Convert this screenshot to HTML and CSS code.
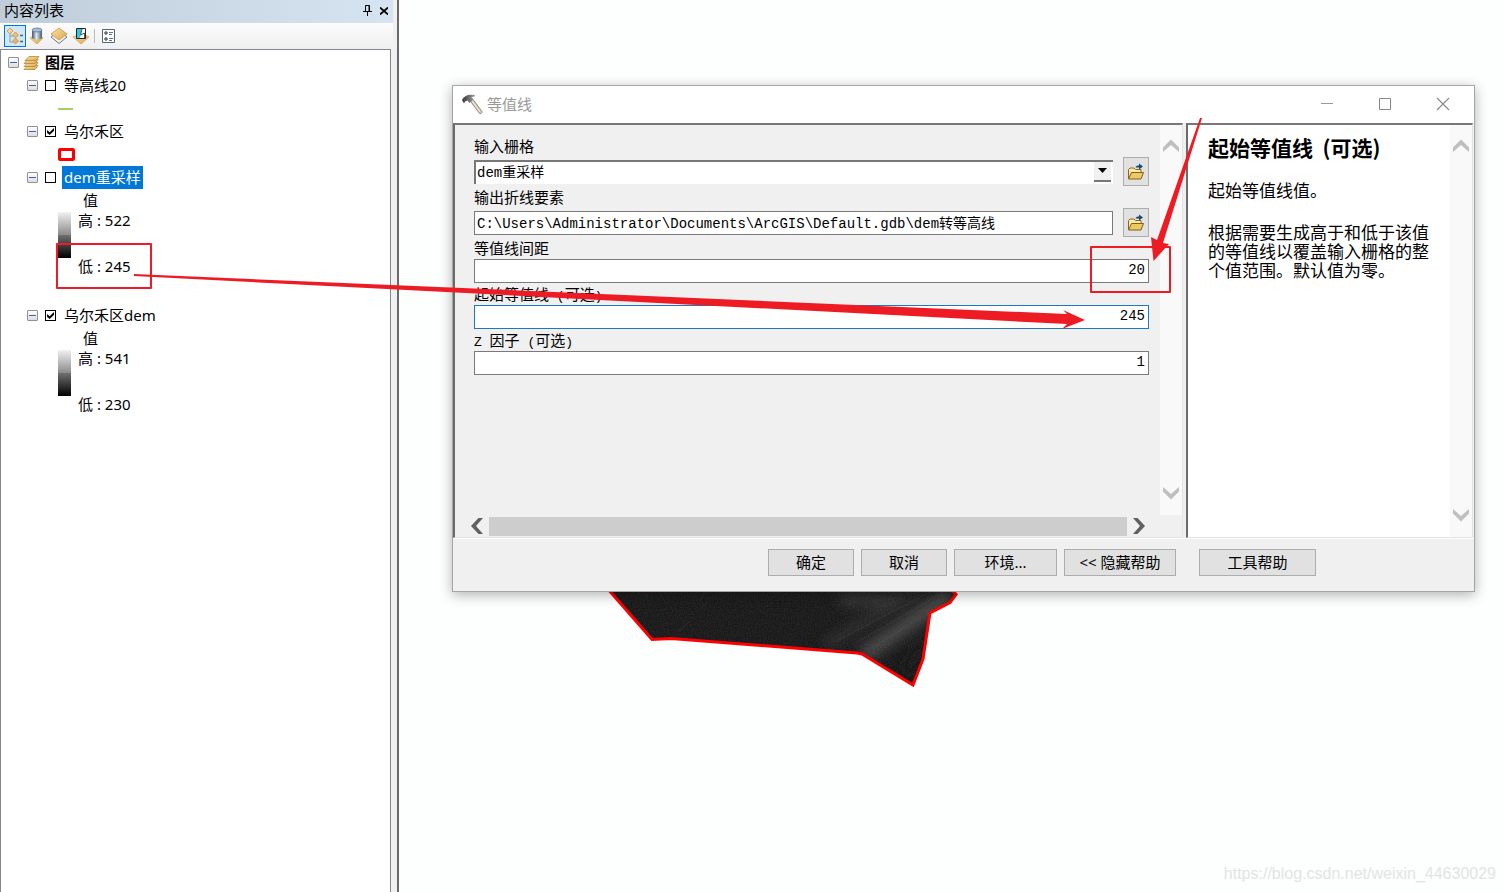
FILE: index.html
```html
<!DOCTYPE html>
<html lang="zh-CN">
<head>
<meta charset="utf-8">
<title>等值线</title>
<link rel="stylesheet" href="styles.css">
</head>
<body>
<svg class="defs" width="0" height="0" aria-hidden="true">
  <defs>
    <linearGradient id="gold" x1="0" y1="0" x2="1" y2="1"><stop offset="0" stop-color="#fbe3ae"/><stop offset="1" stop-color="#dca648"/></linearGradient>
    <linearGradient id="drum" x1="0" x2="1"><stop offset="0" stop-color="#3f566f"/><stop offset=".45" stop-color="#dfe8f2"/><stop offset="1" stop-color="#425a76"/></linearGradient>
    <linearGradient id="steel" x1="0" x2="1"><stop offset="0" stop-color="#333"/><stop offset="1" stop-color="#a0a5a5"/></linearGradient>
    <symbol id="folder" viewBox="0 0 18 18">
      <path d="M1.500 15.500V6.500L3 5h4l1.500 1.500h5.500V9" fill="#fbe9a4" stroke="#8a6a22"/>
      <path d="M1.500 16 4.500 9.500h12L14 16z" fill="#edc964" stroke="#806020"/>
      <path d="M8.500 4.500C9 3 10 2.500 12 2.500V.5L16 3.500 12 6.500v-2c-1.500 0-2.500 0-3.500 0z" fill="#164a72"/>
    </symbol>
    <symbol id="chev-up" viewBox="0 0 18 14"><path d="M1 13V8.500L9 .5l8 8V13L9 6z" fill="currentColor"/></symbol>
    <symbol id="chev-down" viewBox="0 0 18 14"><path d="M1 1v4.500l8 8 8-8V1L9 8z" fill="currentColor"/></symbol>
  </defs>
</svg>
<div class="app">
  <aside class="toc">
    <header class="toc-head">
      <h1>内容列表</h1>
      <button class="plain" aria-label="固定"><svg width="9" height="11" viewBox="0 0 9 11"><path d="M2.500 6V.5h4V6M6 1v5M0 6.500h9M4.500 7v4" fill="none" stroke="#000"/></svg></button>
      <button class="plain" aria-label="关闭"><svg width="8" height="8" viewBox="0 0 8 8"><path d="M0 .5 8 7.500M8 .5 0 7.500" stroke="#000" stroke-width="1.800"/></svg></button>
    </header>
    <nav class="toolbar">
      <button class="tool on" aria-label="按绘制顺序列出"><svg width="18" height="18" viewBox="0 0 18 18"><path d="M4 7v8h5M4 9h5" fill="none" stroke="#7f9db5"/><path d="M4 1 7 4 4 7 1 4zM9.500 5l3 3-3 3-3-3zM9.500 11l3 3-3 3-3-3z" fill="url(#gold)" stroke="#c99443" stroke-width=".8"/><path d="M14 8.500h3M14 14.500h3" stroke="#47637f" stroke-width="1.500"/></svg></button>
      <button class="tool" aria-label="按源列出"><svg width="18" height="18" viewBox="0 0 18 18"><path d="M2 11 9 7l6 4-6 6z" fill="url(#gold)" stroke="#cf9d4b" stroke-width=".7"/><path d="M4 3v8c2 2 8 2 10 0V3z" fill="url(#drum)"/><ellipse cx="9" cy="3" rx="5" ry="2" fill="#a9bdd4" stroke="#506985" stroke-width=".7"/></svg></button>
      <button class="tool" aria-label="按可见性列出"><svg width="18" height="18" viewBox="0 0 18 18"><path d="M1 10 9 4l8 6-8 6.500z" fill="#f2f3f4" stroke="#707780"/><path d="M1 7 9 1l8 6-8 6z" fill="url(#gold)" stroke="#c9943e" stroke-width=".8"/></svg></button>
      <button class="tool" aria-label="按选择列出"><svg width="18" height="18" viewBox="0 0 18 18"><path d="M1 10 9 6l8 4-8 7z" fill="url(#gold)" stroke="#d09c48" stroke-width=".7"/><path d="M4.500 1.500h9v10h-9z" fill="#fff" stroke="#222"/><path d="M5 2h5L8 11H5z" fill="#26cce7"/><path d="M10 2 8.500 8l4-2v5" fill="none" stroke="#555"/></svg></button>
      <span class="sep"></span>
      <button class="tool" aria-label="选项"><svg width="14" height="16" viewBox="0 0 14 16"><path d="M.5 1.500h12v13H.5z" fill="#fff" stroke="#52667c"/><circle cx="4" cy="5" r="1.200" fill="#fff" stroke="#222"/><circle cx="4" cy="11" r="1.200" fill="#fff" stroke="#222"/><path d="M7 4.500h4M7 6.500h3M7 10.500h4M7 12.500h3" stroke="#60758b"/></svg></button>
    </nav>
    <div class="tree">
      <div class="row root"><button class="exp" aria-label="折叠"></button><svg width="18" height="16" viewBox="0 0 18 16"><g fill="url(#gold)" stroke="#b98736" stroke-width=".8"><path d="M1 14.500 5 10.500h10l-3 4z"/><path d="M1 11.500 5 7.500h10l-3 4z"/><path d="M1 8.500 5 4.500h10l-3 4z"/><path d="M2 5.500 6 1.500h10l-3 4z"/></g></svg><b>图层</b></div>
      <div class="row"><button class="exp" aria-label="折叠"></button><label><input type="checkbox" class="tick"><span>等高线20</span></label></div>
      <div class="row sym"><i class="line-sym"></i></div>
      <div class="row"><button class="exp" aria-label="折叠"></button><label><input type="checkbox" class="tick" checked><span>乌尔禾区</span></label></div>
      <div class="row sym"><i class="box-sym"></i></div>
      <div class="row"><button class="exp" aria-label="折叠"></button><label><input type="checkbox" class="tick"><span class="picked">dem重采样</span></label></div>
      <div class="row value">值</div>
      <div class="legend"><i class="ramp"></i><span>高 : 522</span><span class="low">低 : 245</span></div>
      <div class="row"><button class="exp" aria-label="折叠"></button><label><input type="checkbox" class="tick" checked><span>乌尔禾区dem</span></label></div>
      <div class="row value">值</div>
      <div class="legend"><i class="ramp"></i><span>高 : 541</span><span class="low">低 : 230</span></div>
    </div>
  </aside>

  <main class="map">
    <svg class="raster" width="380" height="120" viewBox="600 580 380 120" aria-hidden="true">
      <defs>
        <clipPath id="area"><path d="M600 580 652 640l19-1 186 14 5 1 51 31 10-26 7-46 20-11 7-7-6-16z"/></clipPath>
        <filter id="soft"><feGaussianBlur stdDeviation="6"/></filter>
        <filter id="grain" x="0" y="0" width="1" height="1"><feTurbulence type="fractalNoise" baseFrequency=".7" numOctaves="2" seed="4"/><feColorMatrix values="0 0 0 0 .6 0 0 0 0 .6 0 0 0 0 .6 .5 0 0 0 -.17"/></filter>
      </defs>
      <g clip-path="url(#area)">
        <path d="M600 580h380v120H600z" fill="#191919"/>
        <g filter="url(#soft)" fill="none">
          <path d="M862 656 950 595" stroke="#444" stroke-width="16"/>
          <path d="M825 645 920 590" stroke="#292929" stroke-width="11"/>
          <path d="M840 600h60" stroke="#303030" stroke-width="14"/>
          <path d="M905 672 925 645" stroke="#151515" stroke-width="14"/>
        </g>
        <path d="M835 642 930 592M852 645 940 594M872 648 945 603M701 609l6-7M678 632l12-11" stroke="#565656" stroke-width=".7" opacity=".4"/>
        <path d="M600 580h380v120H600z" filter="url(#grain)" opacity=".4"/>
      </g>
      <path d="M601 581 652 639.500l19-1 186 14.500 5 1 51 31 10-26 7-46 20-10.500 6-8-5-5" fill="none" stroke="red" stroke-width="3"/>
    </svg>
    <span class="watermark">https://blog.csdn.net/weixin_44630029</span>

    <section class="dialog" role="dialog" aria-labelledby="dlg-title">
      <header class="titlebar">
        <svg width="22" height="22" viewBox="0 0 22 22"><path d="M8.500 7 11 5l10 13.500c.3 1.500-1.200 2.500-2.500 2z" fill="#d5c9b5" stroke="#80786c" stroke-width=".8"/><path d="M11 8 19 19" stroke="#f1eadc"/><path d="M1 7C3 3 7 .8 14 2v1.500c-2 0-3 .5-3.500 1.500L12 7 8.500 10 6.500 7.500 4 8.500 3 10.500z" fill="url(#steel)"/></svg>
        <h2 id="dlg-title">等值线</h2>
        <button class="win" aria-label="最小化"><svg width="14" height="14" viewBox="0 0 14 14"><path d="M1 6.500h12" stroke="#999"/></svg></button>
        <button class="win" aria-label="最大化"><svg width="14" height="14" viewBox="0 0 14 14"><path d="M1.500 1.500h11v11h-11z" fill="none" stroke="#888"/></svg></button>
        <button class="win" aria-label="关闭"><svg width="14" height="14" viewBox="0 0 14 14"><path d="m1 1 12 12M13 1 1 13" stroke="#888" stroke-width="1.100"/></svg></button>
      </header>
      <div class="panes">
        <div class="pane form-pane">
          <form class="fields" id="tool">
            <div class="field">
              <label for="raster">输入栅格</label>
              <div class="pick"><div class="combo"><select id="raster"><option>dem重采样</option></select><span class="drop"><svg width="9" height="5" viewBox="0 0 9 5"><path d="M0 0h9L4.500 5z"/></svg></span></div><button type="button" class="browse" aria-label="浏览"><svg width="18" height="18"><use href="#folder"/></svg></button></div>
            </div>
            <div class="field">
              <label for="out">输出折线要素</label>
              <div class="pick"><input class="box" id="out" type="text" value="C:\Users\Administrator\Documents\ArcGIS\Default.gdb\dem转等高线"><button type="button" class="browse" aria-label="浏览"><svg width="18" height="18"><use href="#folder"/></svg></button></div>
            </div>
            <div class="field"><label for="step">等值线间距</label><input class="box num" id="step" type="text" value="20"></div>
            <div class="field"><label for="base">起始等值线<span class="mono"> (</span>可选<span class="mono">)</span></label><input class="box num focus" id="base" type="text" value="245"></div>
            <div class="field"><label for="zf"><span class="mono">Z </span>因子<span class="mono"> (</span>可选<span class="mono">)</span></label><input class="box num" id="zf" type="text" value="1"></div>
          </form>
          <div class="vbar"><svg width="18" height="14"><use href="#chev-up"/></svg><svg width="18" height="14"><use href="#chev-down"/></svg></div>
          <div class="hbar"><svg width="14" height="18" viewBox="0 0 14 18"><path d="M13 1H8.500L1 9l7.500 8H13L6 9z" fill="#606060"/></svg><i class="thumb"></i><svg width="14" height="18" viewBox="0 0 14 18"><path d="M1 1h4.500L13 9l-7.500 8H1l7-8z" fill="#606060"/></svg></div>
        </div>
        <div class="pane help-pane">
          <article>
            <h3>起始等值线&nbsp; (可选)</h3>
            <p>起始等值线值。</p>
            <p>根据需要生成高于和低于该值的等值线以覆盖输入栅格的整个值范围。默认值为零。</p>
          </article>
          <div class="vbar"><svg width="18" height="14"><use href="#chev-up"/></svg><svg width="18" height="14"><use href="#chev-down"/></svg></div>
        </div>
      </div>
      <footer class="actions">
        <button class="btn">确定</button>
        <button class="btn">取消</button>
        <button class="btn wide">环境...</button>
        <button class="btn wider">&lt;&lt; 隐藏帮助</button>
        <button class="btn help">工具帮助</button>
      </footer>
    </section>
  </main>
</div>
<svg class="marks" width="1505" height="892" viewBox="0 0 1505 892" aria-hidden="true">
  <g fill="none" stroke="#ed1c24" stroke-width="2"><path d="M57 244h94v44H57zM1091 247h79v45h-79z" stroke-linejoin="round"/></g>
  <path d="M134 274 1067 314 1063 310 1085 320 1062 329 1067 324 134 276z" fill="#ed1c24"/>
  <path d="M1200 118 1157 240 1151 237 1153.500 261 1169 244 1163 243 1202 118z" fill="#ed1c24"/>
</svg>
</body>
</html>
```
FILE: styles.css
```css
* { box-sizing: border-box; }
body {
  margin: 0;
  font: 15px/23px "Noto Sans", "Noto Sans CJK SC", sans-serif;
  color: #000;
  background: #fdfefe;
  overflow: hidden;
}
h1, h2, h3, p { margin: 0; font-weight: normal; }
button, input, select { font: inherit; color: inherit; margin: 0; padding: 0; border-radius: 0; }
svg { display: block; flex: none; }
.defs, .marks { position: absolute; top: 0; left: 0; pointer-events: none; }
.app { display: flex; height: 100vh; }

.toc {
  flex: none;
  width: 399px;
  display: flex;
  flex-direction: column;
  padding-right: 4px;
  background: #f0f0f0;
  border-right: 2px solid #6b6b6b;
}
.toc-head {
  display: flex;
  align-items: center;
  gap: 8px;
  height: 23px;
  padding: 0 5px 2px 4px;
  background: linear-gradient(90deg, #bfcddb, #d6e4f2);
}
.toc-head h1 { flex: 1; font-size: 15px; }
.plain { display: grid; place-items: center; border: 0; background: none; }
.toolbar {
  display: flex;
  align-items: center;
  height: 26px;
  padding-left: 4px;
  background: linear-gradient(#fcfcfc, #efefef);
}
.tool { display: grid; place-items: center; width: 22px; height: 22px; border: 0; background: none; }
.tool.on { background: #d2e7f6; border: 1px solid #0078d7; }
.sep { width: 1px; height: 14px; margin: 0 3px 0 2px; background: #bbb; }
.tree { flex: 1; margin-right: 2px; padding-top: 1px; border: 1px solid #828790; border-bottom: 0; background: #fff; }
.row { display: flex; align-items: center; height: 23px; padding-left: 26px; }
.row.root { padding-left: 7px; gap: 4px; }
.row label { display: flex; align-items: center; }
.row label span { padding: 0 2px; }
.row .picked { background: #0078d7; color: #fff; }
.exp {
  width: 11px;
  height: 11px;
  border: 1px solid #919191;
  border-radius: 1px;
  background: linear-gradient(#3f62a8, #3f62a8) center / 7px 1px no-repeat, linear-gradient(#fff, #ddd);
}
.tick { appearance: none; display: grid; place-items: center; width: 11px; height: 11px; margin: 0 6px 0 7px; border: 1px solid #000; background: #fff; }
.tick:checked::before { content: ""; width: 7px; height: 7px; background: #000; clip-path: polygon(0 30%, 38% 62%, 100% 0, 100% 38%, 38% 100%, 0 68%); }
.row.sym { padding-left: 57px; }
.line-sym { width: 15px; height: 2px; background: #a8cf64; }
.box-sym { width: 17px; height: 13px; border: 3px solid red; border-radius: 2px; }
.row.value { padding-left: 82px; }
.legend { display: grid; grid-template: 46px 46px / 13px auto; column-gap: 7px; padding-left: 57px; line-height: 16px; }
.legend .low { grid-column: 2; }
.ramp { background: linear-gradient(#f2f2f2, #8a8a8a 50%, #707070 50%, #000); }

.map { position: relative; flex: 1; min-width: 0; overflow: hidden; }
.raster { position: absolute; left: 201px; top: 580px; }
.watermark { position: absolute; right: 9px; bottom: 7px; font: 16px/22px "Liberation Sans", sans-serif; color: #e2e4e4; }

.dialog {
  position: absolute;
  left: 53px;
  right: 30px;
  top: 85px;
  border: 1px solid #a5a5a5;
  background: #f0f0f0;
  box-shadow: 0 3px 12px rgba(0, 0, 0, .3);
}
.titlebar { display: flex; align-items: center; height: 37px; padding: 0 16px 1px 8px; background: #fff; }
.titlebar h2 { flex: 1; margin-left: 4px; font-size: 15px; color: #999; }
.win { display: grid; place-items: center; width: 30px; height: 30px; margin-left: 28px; border: 0; background: none; }
.panes { display: flex; gap: 3px; height: 416px; padding-right: 1px; border-bottom: 1px solid #fff; }
.pane { border: 2px solid #6b6b6b; border-top-color: #777; border-right: 1px solid #e3e3e3; border-bottom: 1px solid #e3e3e3; }
.form-pane { flex: 1; display: grid; grid-template: 1fr 22px / 1fr 22px; }
.fields { display: flex; flex-direction: column; gap: 3px; padding: 13px 11px 0 19px; }
.field { display: flex; flex-direction: column; font-family: "Liberation Mono", "Noto Sans CJK SC", monospace; }
.field > label { height: 19px; line-height: 21px; }
.mono { font-size: 13px; white-space: pre; }
.pick { display: flex; align-items: center; gap: 10px; height: 29px; }
.box, .combo { flex: 1; min-width: 0; height: 24px; border: 1px solid #7a7a7a; background: #fff; }
.box { flex-basis: auto; padding: 0 2px 2px; font-size: 14px; }
.num { padding-right: 3px; text-align: right; }
.focus { border-color: #1e78be; outline: none; }
.combo { display: grid; grid-template: 1fr / 1fr 19px; border: 0; border-top: 2px solid #777; border-left: 2px solid #777; }
.combo select { grid-area: 1 / 1 / 2 / 3; appearance: none; border: 0; padding: 0 0 4px 1px; background: none; font-size: 14px; outline: none; }
.drop { grid-area: 1 / 2; display: grid; place-items: center; height: 20px; margin-right: 2px; background: #f0f0f0; border-bottom: 2px solid #777; pointer-events: none; }
.browse { display: grid; place-items: center; flex: none; width: 26px; height: 29px; border: 1px solid #adadad; background: #e1e1e1; }
.vbar { display: flex; flex-direction: column; justify-content: space-between; align-items: center; padding: 14px 0 15px; color: #bfbfbf; background: #f9f9f9; }
.hbar { grid-column: 1; display: flex; align-items: center; gap: 5px; padding: 0 14px 0 15px; }
.thumb { flex: 1; height: 19px; background: #cdcdcd; }
.help-pane { flex: none; width: 287px; display: grid; grid-template-columns: 1fr 22px; background: #fff; }
article { padding: 10px 18px 0 20px; font: 17px/19px "Noto Sans CJK SC", sans-serif; }
article h3 { margin-bottom: 21px; font-size: 21px; line-height: 24px; font-weight: bold; }
article p { margin-bottom: 23px; }
.actions { display: flex; justify-content: flex-end; gap: 7px; padding: 10px 158px 15px 0; }
.btn { width: 86px; height: 27px; padding-bottom: 2px; border: 1px solid #adadad; background: #e1e1e1; line-height: 20px; }
.btn.wide { width: 103px; }
.btn.wider { width: 112px; }
.btn.help { width: 117px; margin-left: 16px; }
```
